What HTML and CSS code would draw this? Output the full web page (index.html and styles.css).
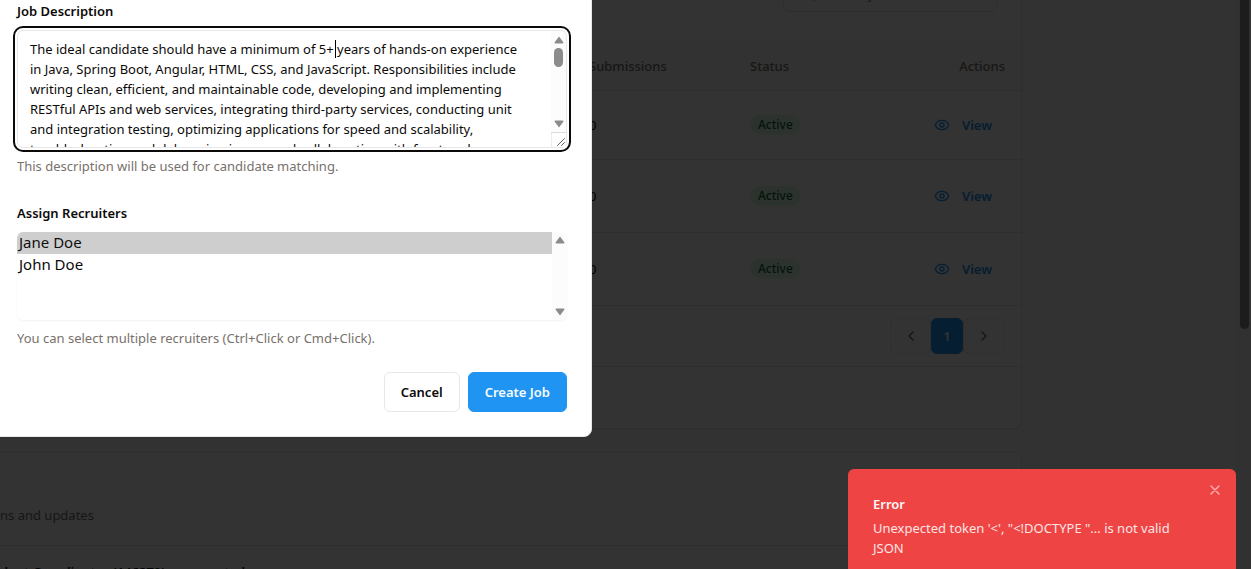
FILE: index.html
```html
<!DOCTYPE html>
<html lang="en">
<head>
<meta charset="utf-8">
<title>Create Job</title>
<link rel="stylesheet" href="styles.css">
</head>
<body>
<svg class="defs" aria-hidden="true">
  <symbol id="eye" viewBox="0 0 24 24"><path d="M2.06 12.35a1 1 0 0 1 0-.7 10.75 10.75 0 0 1 19.88 0 1 1 0 0 1 0 .7 10.75 10.75 0 0 1-19.88 0"/><circle cx="12" cy="12" r="3"/></symbol>
</svg>

<main class="page">
  <section class="card jobs">
    <div class="toolbar">
      <div class="search">
        <svg viewBox="0 0 24 24"><circle cx="11" cy="11" r="8"/><path d="m21 21-4.300-4.300"/></svg>
        <input type="search" placeholder="Search jobs..." aria-label="Search jobs">
      </div>
    </div>
    <table class="table">
      <colgroup><col><col class="col-sub"><col class="col-status"><col class="col-actions"></colgroup>
      <thead><tr><td></td><th>Submissions</th><th>Status</th><th class="right">Actions</th></tr></thead>
      <tbody>
        <tr class="first"><td></td><td>0</td><td><span class="badge">Active</span></td><td class="right"><a class="view" href="#"><svg class="eye"><use href="#eye"/></svg>View</a></td></tr>
        <tr><td></td><td>0</td><td><span class="badge">Active</span></td><td class="right"><a class="view" href="#"><svg class="eye"><use href="#eye"/></svg>View</a></td></tr>
        <tr><td></td><td>0</td><td><span class="badge">Active</span></td><td class="right"><a class="view" href="#"><svg class="eye"><use href="#eye"/></svg>View</a></td></tr>
      </tbody>
    </table>
    <nav class="pager">
      <button type="button" class="step" aria-label="Previous"><svg viewBox="0 0 24 24"><path d="m15 18-6-6 6-6"/></svg></button>
      <button type="button" class="current">1</button>
      <button type="button" class="step" aria-label="Next"><svg viewBox="0 0 24 24"><path d="m9 18 6-6-6-6"/></svg></button>
    </nav>
  </section>
  <section class="card activity">
    <p class="subtitle">ns and updates</p>
    <p class="entry">dent Coordinator (146270) was created</p>
  </section>
</main>
<div class="page-scroll"><div class="page-thumb"></div></div>
<div class="backdrop"></div>

<form class="dialog" role="dialog" aria-label="Create Job">
  <label class="label" for="desc">Job Description</label>
  <div class="field">
    <textarea id="desc" class="desc" spellcheck="false">The ideal candidate should have a minimum of 5+ years of hands-on experience
in Java, Spring Boot, Angular, HTML, CSS, and JavaScript. Responsibilities include
writing clean, efficient, and maintainable code, developing and implementing
RESTful APIs and web services, integrating third-party services, conducting unit
and integration testing, optimizing applications for speed and scalability,
troubleshooting and debugging issues, and collaborating with front-end</textarea>
    <span class="caret"></span>
    <div class="bar bar-desc">
      <svg class="arrow" viewBox="0 0 10 8"><path d="M5 .5 9.500 6.500Q9.500 7.500 8.500 7.500H1.500Q.5 7.500.5 6.500Z"/></svg>
      <span class="thumb"></span>
      <svg class="arrow end" viewBox="0 0 10 8"><path d="M5 7.500 9.500 1.500Q9.500.5 8.500.5H1.500Q.5.5.5 1.500Z"/></svg>
      <svg class="grip" viewBox="0 0 15 15"><path d="M0 15V.5H15" class="grip-edge"/><path d="M6.500 13.500 13.500 6.500M10.500 13.500 13.500 10.500"/></svg>
    </div>
  </div>
  <p class="hint">This description will be used for candidate matching.</p>
  <label class="label second" for="rec">Assign Recruiters</label>
  <div class="field">
    <select id="rec" class="recruiters" multiple size="4"><option selected>Jane Doe</option><option>John Doe</option></select>
    <div class="bar bar-rec">
      <svg class="arrow" viewBox="0 0 10 8"><path d="M5 .5 9.500 6.500Q9.500 7.500 8.500 7.500H1.500Q.5 7.500.5 6.500Z"/></svg>
      <svg class="arrow end" viewBox="0 0 10 8"><path d="M5 7.500 9.500 1.500Q9.500.5 8.500.5H1.500Q.5.5.5 1.500Z"/></svg>
    </div>
  </div>
  <p class="hint">You can select multiple recruiters (Ctrl+Click or Cmd+Click).</p>
  <div class="buttons">
    <button type="button" class="btn">Cancel</button>
    <button type="submit" class="btn primary">Create Job</button>
  </div>
</form>

<div class="toast" role="alert">
  <strong class="toast-title">Error</strong>
  <p class="toast-text">Unexpected token '&lt;', "&lt;!DOCTYPE "... is not valid JSON</p>
  <button type="button" class="close" aria-label="Close"><svg viewBox="0 0 24 24"><path d="M18 6 6 18M6 6l12 12"/></svg></button>
</div>
</body>
</html>
```
FILE: styles.css
```css
* { box-sizing: border-box; }
body {
  margin: 0;
  height: 100vh;
  overflow: hidden;
  position: relative;
  background: #fafafa;
  color: #0c0a09;
  font: 13px/20px "Noto Sans", "Open Sans", sans-serif;
}
button, input, textarea, select { font: inherit; color: inherit; }
p { margin: 0; }
svg { fill: none; stroke: currentColor; stroke-width: 2; stroke-linecap: round; stroke-linejoin: round; }
.defs { position: absolute; width: 0; height: 0; }

/* Page behind the dialog */
.page { display: flex; flex-direction: column; gap: 23px; margin-right: 229px; }
.card {
  border: 1px solid #e5e7eb;
  border-left: 0;
  border-radius: 0 8px 8px 0;
  background: #fcfcfc;
  box-shadow: 0 1px 2px rgba(0, 0, 0, .05);
}
.jobs { border-top: 0; border-top-right-radius: 0; padding-bottom: 61px; }
.toolbar { display: flex; justify-content: flex-end; padding: 0 24px 30px; height: 42px; }
.search {
  display: flex;
  align-items: center;
  gap: 8px;
  width: 214px;
  height: 36px;
  margin-top: -24px;
  padding: 0 12px 0 16px;
  border: 1px solid #e5e7eb;
  border-radius: 6px;
  color: #78716c;
}
.search svg { width: 16px; height: 16px; flex: none; }
.search input { width: 100%; padding: 0; border: 0; background: none; }
.table { width: 100%; table-layout: fixed; border-collapse: collapse; }
.col-sub { width: 161px; }
.col-status { width: 160px; }
.col-actions { width: 127px; }
.table th { height: 48px; padding: 0 16px; text-align: left; font-weight: 500; color: #78716c; }
.table td { padding: 0 16px; height: 73px; }
.table thead td { height: 48px; }
.table .first td { height: 69px; }
.table tr { border-bottom: 1px solid #e5e7eb; }
.table .right { text-align: right; }
.table thead tr { background: #f9f9f9; }
.badge {
  display: inline-block;
  padding: 0 8px;
  border-radius: 10px;
  background: #dcfce7;
  color: #166534;
  font-size: 12px;
  font-weight: 500;
  vertical-align: middle;
}
.view {
  display: inline-flex;
  align-items: center;
  gap: 12px;
  padding-right: 13px;
  color: #2094f3;
  font-weight: 600;
  text-decoration: none;
  vertical-align: middle;
}
.eye { width: 16px; height: 16px; }
.pager { display: flex; justify-content: flex-end; padding: 12px 17px; border-bottom: 1px solid #e5e7eb; }
.pager button {
  display: flex;
  align-items: center;
  justify-content: center;
  height: 36px;
  padding: 0;
  border: 1px solid #eceef0;
  border-radius: 6px;
  background: none;
}
.pager .step { width: 41px; color: #666; }
.pager .current { width: 32px; background: #2094f3; border-color: #2094f3; color: #fff; font-weight: 600; }
.pager svg { width: 16px; height: 16px; }
.activity { padding-top: 52px; }
.subtitle { padding-bottom: 20px; border-bottom: 1px solid #e5e7eb; color: #78716c; }
.entry { padding-top: 16px; font-weight: 600; }

.page-scroll { position: absolute; inset: 0 0 0 auto; width: 14px; background: #f5f5f5; }
.page-thumb { width: 9px; height: 329px; margin-left: 3px; border-radius: 0 0 5px 5px; background: #8b8b8b; }
.backdrop { position: absolute; inset: 0; background: rgba(0, 0, 0, .8); }

/* Dialog */
.dialog {
  position: absolute;
  top: -24px;
  left: -8px;
  width: 600px;
  padding: 24px;
  border: 1px solid #e5e7eb;
  border-radius: 8px;
  background: #fff;
}
.label { display: block; margin-bottom: 9px; font-weight: 600; }
.second { margin-top: 27px; }
.field { position: relative; display: flex; }
.desc {
  width: 100%;
  height: 118px;
  padding: 8px 40px 8px 12px;
  border: 1px solid #e5e7eb;
  border-radius: 6px;
  outline: 2px solid #0c0a09;
  outline-offset: 2px;
  background: #fff;
  white-space: pre;
  overflow: hidden;
  resize: none;
}
.caret { position: absolute; left: 318px; top: 10px; width: 1px; height: 18px; background: #000; }
.bar { position: absolute; display: flex; flex-direction: column; align-items: center; width: 15px; background: #fcfcfc; }
.bar-desc { top: 1px; right: 1px; bottom: 1px; padding-top: 5px; border-radius: 0 6px 6px 0; gap: 4px; }
.bar-rec { top: 0; right: 0; bottom: 0; padding: 4px 0; border-radius: 0 6px 6px 0; }
.arrow { width: 10px; height: 8px; fill: #8b8b8b; stroke: none; }
.end { margin-top: auto; }
.thumb { width: 9px; height: 19px; border-radius: 5px; background: #8b8b8b; }
.grip { width: 15px; height: 15px; color: #666; stroke-width: 1; background: #fff; }
.grip-edge { stroke: #dcdcdc; }
.hint { margin-top: 8px; color: #78716c; }
.recruiters {
  width: 100%;
  height: 88px;
  padding: 0 15px 0 0;
  border: 0;
  border-radius: 6px;
  box-shadow: 0 1px 2px rgba(0, 0, 0, .05);
  background: #fff;
  font-size: 15px;
  overflow: hidden;
}
.recruiters option { height: 22px; padding: 0 2px; line-height: 22px; }
.buttons { display: flex; justify-content: flex-end; gap: 8px; margin-top: 24px; }
.btn {
  height: 40px;
  padding: 0 16px;
  border: 1px solid #e5e7eb;
  border-radius: 6px;
  background: #fff;
  font-weight: 600;
}
.primary { border-color: #2094f3; background: #2094f3; color: #f8fafc; }

/* Notification */
.toast {
  position: absolute;
  top: 469px;
  right: 15px;
  width: 388px;
  padding: 25px 48px 24px 25px;
  border-radius: 6px;
  background: #ef4444;
  color: #fafafa;
}
.toast-title { display: block; margin-bottom: 4px; font-weight: 600; }
.toast-text { color: #fde4e4; }
.close {
  position: absolute;
  top: 13px;
  right: 13px;
  width: 16px;
  height: 16px;
  padding: 0;
  border: 0;
  background: none;
  color: #f9b4b4;
}
.close svg { display: block; width: 16px; height: 16px; }
```
